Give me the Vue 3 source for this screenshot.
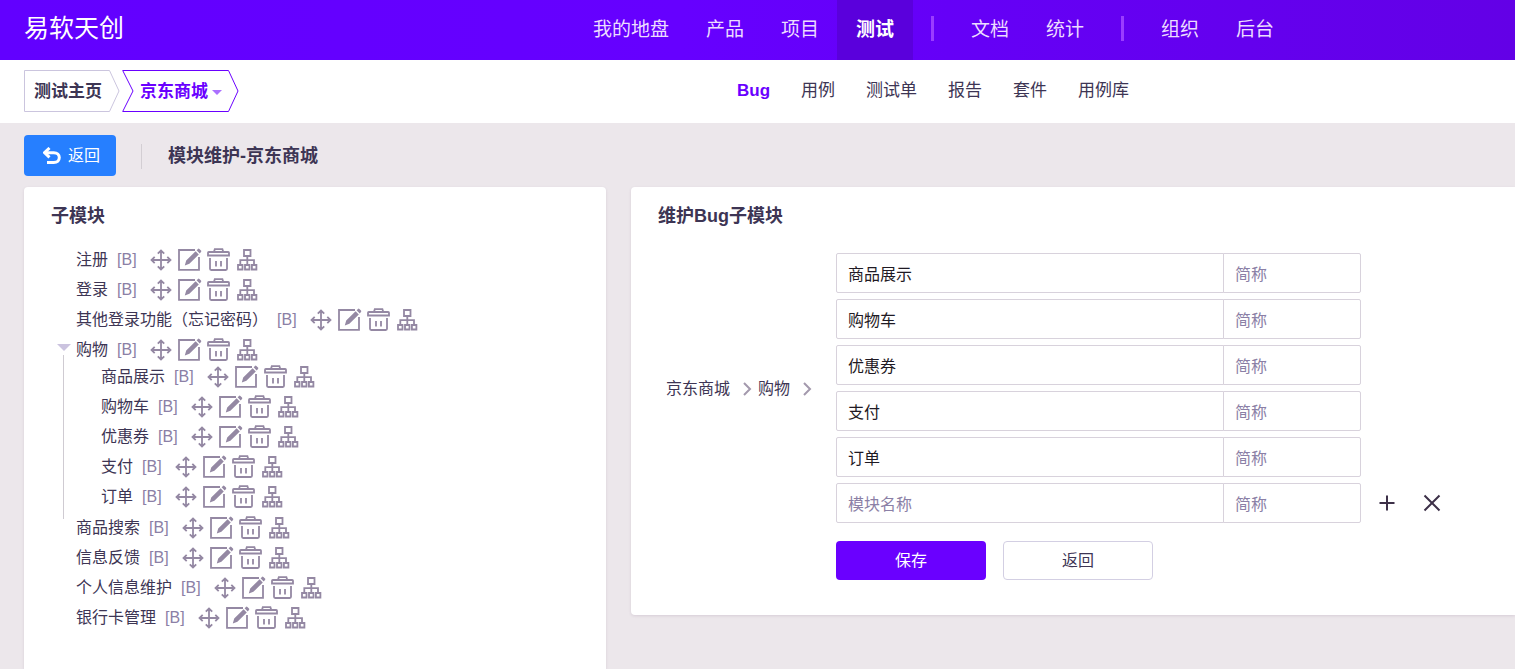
<script setup>
import { computed, reactive, ref } from 'vue'

const mainNav = [
  [{ text: '我的地盘' }, { text: '产品' }, { text: '项目' }, { text: '测试', active: true }],
  [{ text: '文档' }, { text: '统计' }],
  [{ text: '组织' }, { text: '后台' }]
]
const subNav = ['Bug', '用例', '测试单', '报告', '套件', '用例库']

const open = ref(true)
const before = ['注册', '登录', '其他登录功能（忘记密码）']
const children = ['商品展示', '购物车', '优惠券', '支付', '订单']
const after = ['商品搜索', '信息反馈', '个人信息维护', '银行卡管理']

const nodes = computed(() => [
  ...before.map((name) => ({ name })),
  { name: '购物', parent: true },
  ...(open.value ? [{ group: children }] : []),
  ...after.map((name) => ({ name }))
])

const actions = [
  {
    label: '移动',
    d: 'M12 2.5V21.5M2.5 12H21.5M8.8 5.7L12 2.5L15.2 5.7M8.8 18.3L12 21.5L15.2 18.3M5.7 8.8L2.5 12L5.7 15.2M18.3 8.8L21.5 12L18.3 15.2'
  },
  {
    label: '编辑',
    d: 'M17 2H1V21.8H21V9',
    fill: 'M6.8 17.5L8.2 12.6L17.6 3.2L20.8 6.4L11.4 15.8ZM18.6 2.3L20 .9Q20.7 .3 21.4 1L23 2.6Q23.6 3.3 23 4L21.7 5.4Z'
  },
  {
    label: '删除',
    d: 'M1.8 4H21.2Q22 4 22 4.8V7.5H1V4.8Q1 4 1.8 4ZM7 3.8L7.8 1.2H15.4L16.2 3.8M3 10V20.8Q3 22 4.2 22H18.8Q20 22 20 20.8V10M9 13V18.4M14 13V18.4'
  },
  {
    label: '子模块',
    d: 'M8 2H14.5V8H8ZM11.3 8V16.5M4.3 16.5V12.2H18V16.5M2 17H6.5V21.5H2ZM9 17H13.5V21.5H9ZM15.9 17H20.4V21.5H15.9Z'
  }
]

const rows = reactive(
  [...children, ''].map((name) => ({ name, short: '' }))
)
const addRow = () => rows.push({ name: '', short: '' })
const removeRow = () => rows.length > 1 && rows.pop()
</script>

<template>
  <div class="page">
    <header class="topbar">
      <a class="brand" href="#">易软天创</a>
      <nav class="main-nav">
        <div v-for="(group, i) in mainNav" :key="i" class="nav-group">
          <a v-for="item in group" :key="item.text" href="#" :class="{ active: item.active }">{{ item.text }}</a>
        </div>
      </nav>
    </header>

    <div class="subbar">
      <div class="switcher">
        <a class="step home" href="#">
          <svg viewBox="0 0 96 42" fill="none"><path d="M85.5 .5H.5V41.5H85.5L95 21Z" /></svg>
          <span>测试主页</span>
        </a>
        <button class="step current" type="button">
          <svg viewBox="0 0 117 42" fill="none"><path d="M.7 .5H106.5L116 21L106.5 41.5H.7L11 21Z" /></svg>
          <span>京东商城</span>
          <i class="caret"></i>
        </button>
      </div>
      <nav class="sub-nav">
        <a v-for="(item, i) in subNav" :key="item" href="#" :class="{ active: i === 0 }">{{ item }}</a>
      </nav>
    </div>

    <main class="content">
      <div class="toolbar">
        <a class="back" href="#">
          <svg viewBox="0 0 18 18" fill="none"><path d="M6.5 1L1.5 5.7L6.5 10.4" /><path d="M2.2 5.7H10.8C14.3 5.7 16.3 7.8 16.3 10.6C16.3 13.5 14.3 15.6 10.8 15.6H4" /></svg>
          <span>返回</span>
        </a>
        <h1>模块维护-京东商城</h1>
      </div>

      <div class="columns">
        <section class="card tree-card">
          <h2>子模块</h2>
          <ul class="tree">
            <template v-for="node in nodes" :key="node.name || 'group'">
              <li v-if="node.group" class="branch">
                <ul>
                  <li v-for="name in node.group" :key="name" class="node">
                    <a href="#">{{ name }}</a>
                    <span class="type">[B]</span>
                    <span class="tools">
                      <button v-for="a in actions" :key="a.label" type="button" :aria-label="a.label">
                        <svg viewBox="0 0 24 24"><path class="line" :d="a.d" /><path v-if="a.fill" class="solid" :d="a.fill" /></svg>
                      </button>
                    </span>
                  </li>
                </ul>
              </li>
              <li v-else class="node">
                <button v-if="node.parent" class="toggle" type="button" aria-label="展开" @click="open = !open"></button>
                <a href="#">{{ node.name }}</a>
                <span class="type">[B]</span>
                <span class="tools">
                  <button v-for="a in actions" :key="a.label" type="button" :aria-label="a.label">
                    <svg viewBox="0 0 24 24"><path class="line" :d="a.d" /><path v-if="a.fill" class="solid" :d="a.fill" /></svg>
                  </button>
                </span>
              </li>
            </template>
          </ul>
        </section>

        <section class="card form-card">
          <h2>维护Bug子模块</h2>
          <form class="form" @submit.prevent>
            <div class="path">
              <a href="#">京东商城</a>
              <svg viewBox="0 0 10 14"><path d="M2 1L8 7L2 13" /></svg>
              <a href="#">购物</a>
              <svg viewBox="0 0 10 14"><path d="M2 1L8 7L2 13" /></svg>
            </div>
            <div class="rows">
              <div v-for="(row, i) in rows" :key="i" class="row">
                <div class="pair">
                  <input v-model="row.name" class="name" type="text" placeholder="模块名称" aria-label="模块名称" />
                  <input v-model="row.short" class="short" type="text" placeholder="简称" aria-label="简称" />
                </div>
                <div v-if="i === rows.length - 1" class="row-tools">
                  <button type="button" aria-label="添加" @click="addRow"><svg viewBox="0 0 18 18"><path d="M9 1.5V16.5M1.5 9H16.5" /></svg></button>
                  <button type="button" aria-label="删除" @click="removeRow"><svg viewBox="0 0 18 18"><path d="M1.5 1.5L16.5 16.5M16.5 1.5L1.5 16.5" /></svg></button>
                </div>
              </div>
            </div>
            <div class="buttons">
              <button class="save" type="submit">保存</button>
              <button class="cancel" type="button">返回</button>
            </div>
          </form>
        </section>
      </div>
    </main>
  </div>
</template>

<style>
body {
  margin: 0;
  background: #ece7eb;
}
</style>

<style scoped>
.page {
  display: flex;
  flex-direction: column;
  min-height: 100vh;
  overflow: hidden;
  color: #3d3554;
  font: 16px/20px "Liberation Sans", "Noto Sans CJK SC", sans-serif;
}
.page * {
  box-sizing: border-box;
}
a {
  color: inherit;
  text-decoration: none;
}
button {
  margin: 0;
  padding: 0;
  border: 0;
  background: none;
  color: inherit;
  font: inherit;
  cursor: pointer;
}
ul {
  margin: 0;
  padding: 0;
  list-style: none;
}
svg {
  display: block;
}
h1,
h2 {
  margin: 0;
  font-size: 18px;
  line-height: 26px;
}

.topbar {
  display: flex;
  height: 60px;
  background: linear-gradient(90deg, #6200ff 0%, #6600ff 45%, #6300e6 100%);
  color: #fff;
  white-space: nowrap;
}
.brand {
  flex: 0 0 574px;
  padding-left: 24px;
  font-size: 25px;
  line-height: 57px;
}
.main-nav,
.nav-group {
  display: flex;
}
.nav-group a {
  height: 60px;
  padding: 0 19px;
  color: #ecdcff;
  font-size: 19px;
  line-height: 59px;
}
.nav-group a + a {
  margin-left: -1px;
}
.nav-group .active {
  background: #5a00dc;
  color: #fff;
  font-weight: 700;
}
.nav-group + .nav-group::before {
  width: 3px;
  height: 25px;
  margin: 16px 18px 0;
  background: #9a3cff;
  content: "";
}

.subbar {
  display: flex;
  height: 63px;
  padding: 10px 0 0 24px;
  background: #fff;
  white-space: nowrap;
}
.switcher {
  display: flex;
  flex: 0 0 713px;
  gap: 2px;
}
.step {
  position: relative;
  display: flex;
  align-items: center;
  height: 42px;
  font-size: 17px;
  font-weight: 700;
  line-height: 22px;
}
.step span {
  padding-top: 2px;
}
.step svg {
  position: absolute;
  inset: 0;
  width: 100%;
  height: 100%;
  stroke: #cbc5de;
}
.home {
  width: 96px;
  padding-left: 10px;
}
.current {
  width: 117px;
  padding-left: 18px;
  color: #6a00ff;
}
.current svg {
  stroke: #6a00ff;
}
.caret {
  margin: 3px 0 0 4px;
  border: 5px solid transparent;
  border-top-color: #ab70ff;
  border-bottom: 0;
}
.sub-nav {
  display: flex;
  gap: 31px;
  font-size: 17px;
  line-height: 42px;
}
.sub-nav .active {
  color: #6a00ff;
  font-weight: 700;
}

.content {
  display: flex;
  flex: 1;
  flex-direction: column;
  padding: 12px 0 0 24px;
}
.toolbar {
  display: flex;
  align-items: center;
  height: 41px;
  margin-bottom: 11px;
}
.back {
  display: flex;
  gap: 7px;
  align-items: center;
  height: 41px;
  margin-right: 25px;
  padding: 0 16px 0 19px;
  border-radius: 4px;
  background: #267fff;
  color: #fff;
}
.back svg {
  width: 18px;
  height: 18px;
  stroke: #fff;
  stroke-width: 3;
}
.toolbar h1 {
  position: relative;
  padding-left: 27px;
}
.toolbar h1::before {
  position: absolute;
  top: 1px;
  left: 0;
  width: 1px;
  height: 25px;
  background: #d3ced3;
  content: "";
}

.columns {
  display: grid;
  flex: 1;
  grid-template-columns: 582fr 884fr;
  gap: 25px;
}
.card {
  min-width: 0;
  padding: 16px 27px 0;
  border-radius: 4px 4px 0 0;
  background: #fff;
  box-shadow: 0 1px 3px rgba(70, 30, 80, 0.12);
}
.form-card {
  align-self: start;
  padding-bottom: 35px;
  border-radius: 4px 0 0 4px;
}

.tree {
  margin-top: 16px;
  padding: 0 0 36px 25px;
}
.node {
  position: relative;
  display: flex;
  align-items: center;
  height: 30px;
  white-space: nowrap;
}
.type {
  margin: 0 12px 0 9px;
  color: #8b80a6;
}
.tools {
  display: flex;
  gap: 5px;
}
.tools svg {
  width: 24px;
  height: 24px;
}
.line {
  fill: none;
  stroke: #9488a3;
  stroke-width: 1.8;
}
.solid {
  fill: #9488a3;
}
.toggle {
  position: absolute;
  top: 9px;
  left: -19px;
  border: 7px solid transparent;
  border-top-color: #cbc3df;
  border-bottom: 0;
}
.branch {
  margin: -10px 0 -6px -13px;
  padding: 7px 0 7px 37px;
  border-left: 1px solid #cfcbd2;
}

.form {
  display: grid;
  grid-template-columns: 178px minmax(0, 1fr);
  margin-top: 24px;
}
.path {
  display: flex;
  align-items: center;
  padding: 2px 0 0 8px;
  white-space: nowrap;
}
.path svg {
  width: 10px;
  height: 14px;
  margin: 0 6px 0 12px;
  fill: none;
  stroke: #a399ad;
  stroke-width: 2;
}
.rows {
  display: grid;
  gap: 6px;
}
.row {
  display: flex;
}
.pair {
  display: grid;
  flex: 0 1 525px;
  grid-template-columns: 388fr 137fr;
  min-width: 0;
}
.pair input {
  min-width: 0;
  height: 40px;
  padding: 0 11px;
  border: 1px solid #d8d2dc;
  outline: 0;
  background: #fff;
  color: #1f1a24;
  font: 16px/24px "Noto Sans CJK SC", sans-serif;
}
.pair input::placeholder {
  color: #8b80a6;
  opacity: 1;
}
.pair .name {
  border-radius: 2px 0 0 2px;
}
.pair .short {
  margin-left: -1px;
  border-radius: 0 2px 2px 0;
}
.row-tools {
  display: flex;
  gap: 27px;
  align-items: center;
  margin-left: 17px;
}
.row-tools svg {
  width: 18px;
  height: 18px;
  fill: none;
  stroke: #3d3048;
  stroke-width: 2;
}
.buttons {
  display: flex;
  grid-column: 2;
  gap: 17px;
  margin-top: 18px;
}
.buttons button {
  width: 150px;
  height: 39px;
  border-radius: 4px;
}
.save {
  background: #6a00ff;
  color: #fff;
}
.buttons .cancel {
  border: 1px solid #d3cfe3;
}
</style>
